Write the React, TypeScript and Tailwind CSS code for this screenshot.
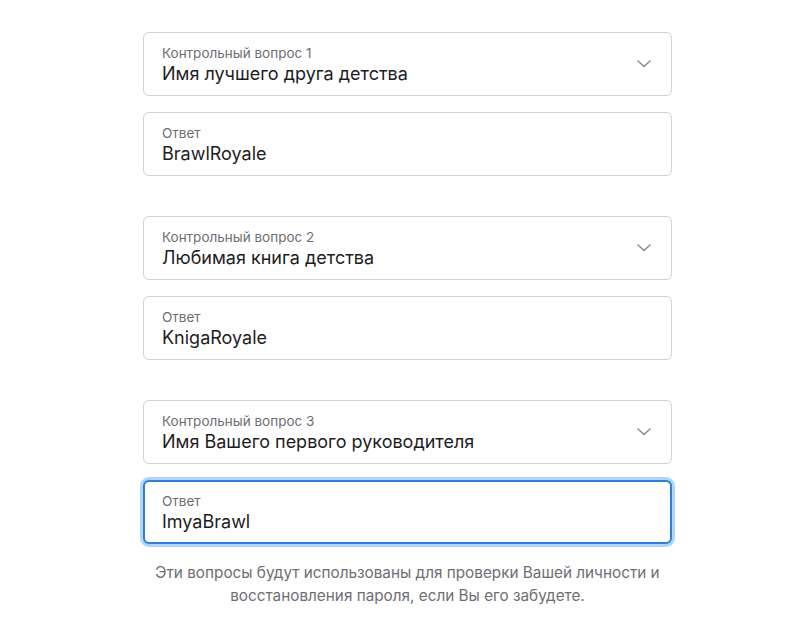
import React from "react";

function Chevron() {
  return (
    <svg width="14" height="8" viewBox="0 0 14 8" fill="none" className="shrink-0">
      <path d="M1 1l6 5.5L13 1" stroke="#86868b" strokeWidth="1.4" strokeLinecap="round" strokeLinejoin="round" />
    </svg>
  );
}

type FieldProps = {
  label: string;
  value: string;
  select?: boolean;
  focused?: boolean;
};

function Field({ label, value, select, focused }: FieldProps) {
  return (
    <div
      className={
        focused
          ? "h-[64px] rounded-[6px] border-2 border-[#2f7fd6] shadow-[0_0_0_3px_rgba(0,125,250,0.32)] bg-white flex items-center pl-[17px] pr-[19px]"
          : "h-[64px] rounded-[6px] border border-[#d2d2d7] bg-white flex items-center pl-[18px] pr-[20px]"
      }
    >
      <div className="flex-1 flex flex-col pt-[1px]">
        <span className="text-[13.5px] leading-[18px] text-[#6e6e73]">{label}</span>
        <span className="text-[18px] leading-[24px] text-[#1d1d1f]">{value}</span>
      </div>
      {select && <Chevron />}
    </div>
  );
}

const questions = [
  { q: "Контрольный вопрос 1", text: "Имя лучшего друга детства", answer: "BrawlRoyale" },
  { q: "Контрольный вопрос 2", text: "Любимая книга детства", answer: "KnigaRoyale" },
  { q: "Контрольный вопрос 3", text: "Имя Вашего первого руководителя", answer: "ImyaBrawl" },
];

export default function App() {
  return (
    <div className="min-h-screen bg-white font-['Inter','Noto_Sans',sans-serif]">
      <div className="ml-[143px] w-[529px] pt-[32px] flex flex-col gap-[40px]">
        {questions.map((item, idx) => (
          <div key={idx} className="flex flex-col gap-[16px]">
            <Field label={item.q} value={item.text} select />
            <Field label="Ответ" value={item.answer} focused={idx === 2} />
          </div>
        ))}
      </div>
      <p className="ml-[143px] w-[529px] mt-[17px] text-center text-[15.3px] leading-[23px] text-[#6e6e73]">
        Эти вопросы будут использованы для проверки Вашей личности и
        <br />
        восстановления пароля, если Вы его забудете.
      </p>
    </div>
  );
}
